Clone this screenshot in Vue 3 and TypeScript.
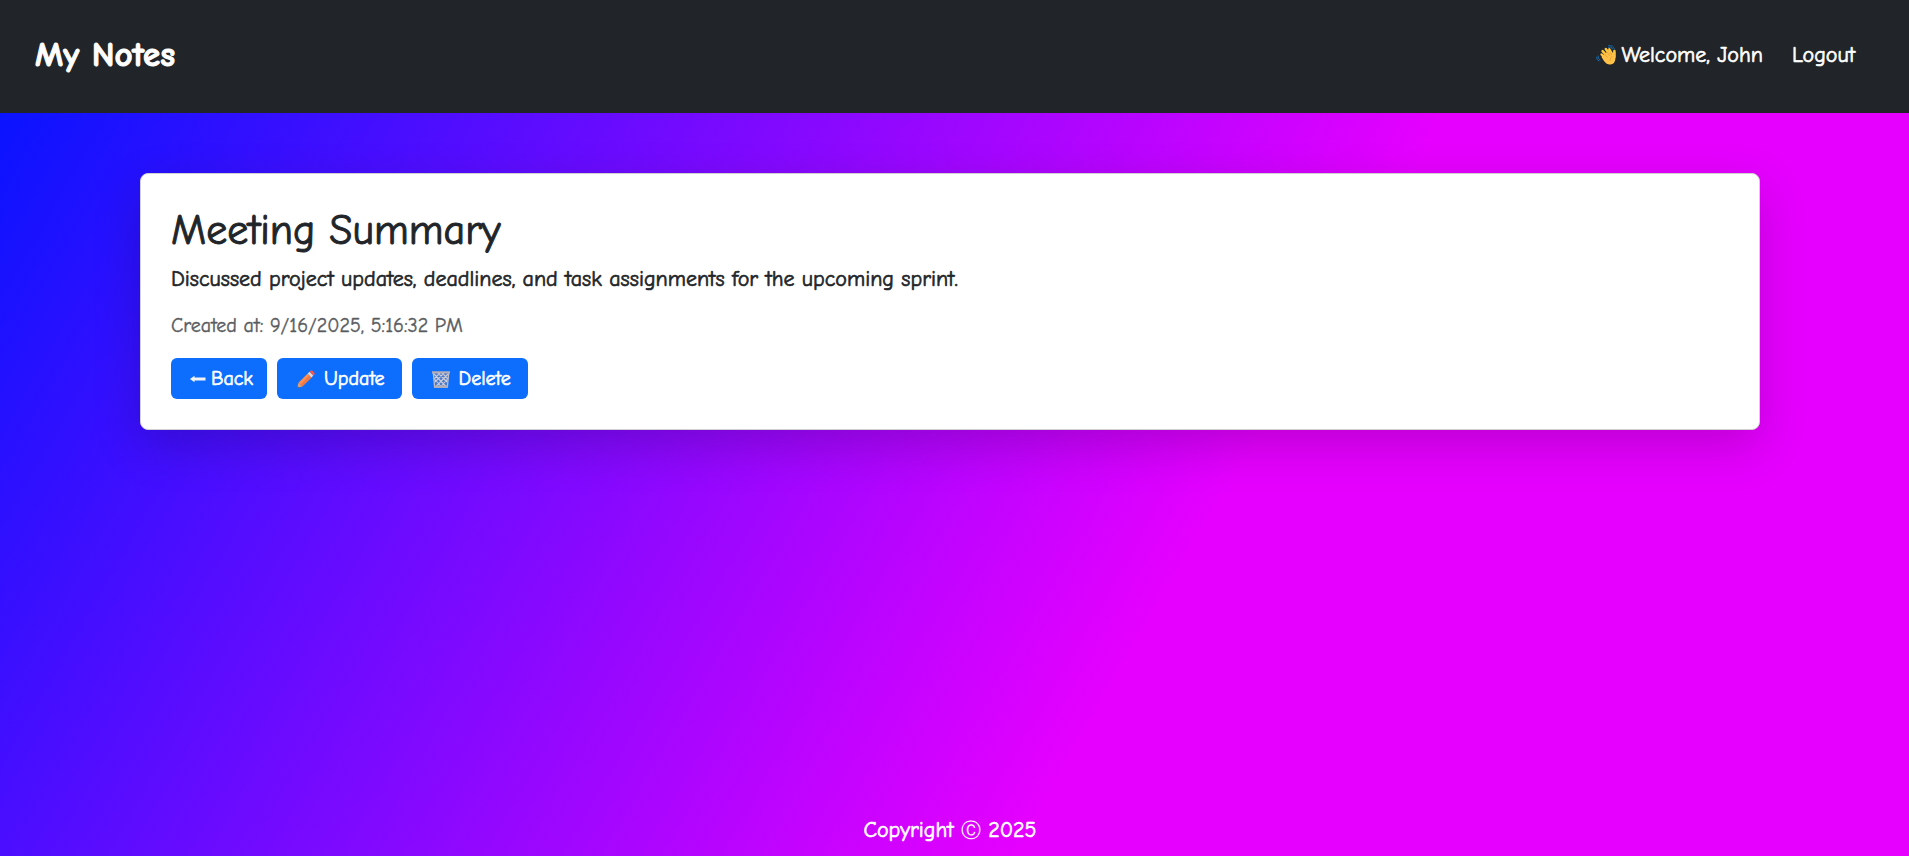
<script setup lang="ts">
interface Note {
  title: string
  body: string
  createdAt: string
}

const user = 'John'
const note: Note = {
  title: 'Meeting Summary',
  body: 'Discussed project updates, deadlines, and task assignments for the upcoming sprint.',
  createdAt: '9/16/2025, 5:16:32 PM',
}
</script>

<template>
  <div class="page">
    <header class="navbar">
      <a class="brand" href="#">My Notes</a>
      <nav class="links">
        <span class="welcome">
          <svg class="wave" viewBox="0 0 20 20" aria-hidden="true">
            <g fill="none" stroke="#176bb0" stroke-width="1" stroke-linecap="round">
              <path d="M12.5 2.5Q15.5 1 16.5 4M12.5 .8Q17.5 -.3 18.3 4" />
              <path d="M2 11Q1.5 14 4 15M.6 12.2Q.5 15.5 3 16" />
            </g>
            <g fill="none" stroke="#ffc83d" stroke-width="2.5" stroke-linecap="round">
              <path d="M6.6 6.2L12 12M9.8 4L14 10M13.3 4.4L16 9M5.6 9.5L10 14M18.4 6V12" />
            </g>
            <path d="M7 10L13 5.5L16.7 9.4L17.3 7L19.4 7V14Q18.8 19.2 14.5 19.5Q11 20 8 16L5.5 12Z" fill="#ffc14a" />
            <path d="M8 8.5L11.5 12.5M11 6.8L14 11M14 7L15.8 10M14 16Q14 12.5 16.5 11" fill="none" stroke="#e6921f" stroke-width=".6" />
          </svg>
          <span>Welcome, {{ user }}</span>
        </span>
        <a class="logout" href="#">Logout</a>
      </nav>
    </header>

    <main class="content">
      <article class="card">
        <h1>{{ note.title }}</h1>
        <p class="body">{{ note.body }}</p>
        <p class="created">Created at: {{ note.createdAt }}</p>
        <div class="actions">
          <button type="button" class="back">
            <svg class="arrow" viewBox="0 0 16 16" aria-hidden="true">
              <path d="M0 8L4.5 4.8V6.5H15.5V9.5H4.5V11.2Z" fill="#f3f3f3" />
            </svg>
            <span>Back</span>
          </button>
          <button type="button">
            <svg class="glyph" viewBox="0 0 18 18" aria-hidden="true">
              <path d="M0 18L1.5 12.7L5.2 16.5Z" fill="#d9a27c" />
              <path d="M0 18L.6 15.8L2.2 17.4Z" fill="#57606f" />
              <path d="M1.5 12.7L10.7 3.6L14.5 7.4L5.2 16.5Z" fill="#ff8f50" />
              <path d="M3.5 14.6L12.5 5.6L14.5 7.4L5.2 16.5Z" fill="#f07846" />
              <path d="M10.7 3.6L12.6 1.8L16.3 5.6L14.5 7.4Z" fill="#d9dbe3" />
              <path d="M12.6 1.8L13.7 .7Q14.5 0 15.4 .8L17.3 2.7Q18.1 3.6 17.3 4.5L16.3 5.6Z" fill="#ff5549" />
            </svg>
            <span>Update</span>
          </button>
          <button type="button">
            <svg class="glyph" viewBox="0 0 18 18" aria-hidden="true">
              <path d="M1.3 2.5H16.7L15.4 17.2H2.6Z" fill="#4779cf" />
              <path d="M2 4L14 16.5M6 3L15 12M10 3L16 9M2.5 9L9 16.5M16 4L4 16.5M12 3L3 12M8 3L2 9M15.5 9L9 16.5" fill="none" stroke="#cfcdd6" stroke-width="1.1" />
              <path d="M1.3 2.5L2.6 17H15.4L16.7 2.5" fill="none" stroke="#c2bec8" stroke-width="1.3" />
              <path d="M0 1.2H18V3.4H0ZM2.2 15.5H15.8V17.8H2.2Z" fill="#b5aeb7" />
            </svg>
            <span>Delete</span>
          </button>
        </div>
      </article>
    </main>

    <footer class="footer">Copyright <span class="mark">Ⓒ</span> 2025</footer>
  </div>
</template>

<style>
body {
  margin: 0;
}
</style>

<style scoped>
.page {
  display: flex;
  flex-direction: column;
  min-height: 100vh;
  box-sizing: border-box;
  color: #212529;
  font-family: "Comic Sans MS", "Comic Neue", cursive, "Open Sans", sans-serif;
  font-size: 22px;
  line-height: 30px;
  -webkit-text-stroke: 0.03em currentColor;
  background: linear-gradient(120deg, #0014ff 0%, #e600ff 63%);
}

.navbar {
  display: flex;
  align-items: center;
  justify-content: space-between;
  height: 113px;
  padding: 0 54px 4px 35px;
  box-sizing: border-box;
  background: #212529;
}

.brand {
  color: #fff;
  font-size: 35px;
  line-height: 48px;
  font-weight: 700;
  text-decoration: none;
  -webkit-text-stroke: 1px currentColor;
}

.links {
  display: flex;
  align-items: center;
  gap: 29px;
  color: #fff;
}

.welcome {
  display: flex;
  align-items: center;
  gap: 5px;
}

.wave {
  width: 20px;
  height: 20px;
}

.logout {
  color: #fff;
  text-decoration: none;
}

.content {
  flex: 1;
  padding: 60px 149px 0 140px;
}

.card {
  padding: 32px 30px 30px;
  background: #fff;
  border: 1px solid #d0d0d0;
  border-radius: 8px;
  box-shadow: 0 16px 48px rgba(0, 0, 0, 0.18);
}

h1 {
  margin: 0 0 8px;
  font-size: 42px;
  line-height: 50px;
  font-weight: 400;
  -webkit-text-stroke: 1px currentColor;
}

p {
  margin: 0 0 17px;
}

.created {
  color: #595c5f;
  font-size: 20px;
  -webkit-text-stroke: 0.02em currentColor;
}

.actions {
  display: flex;
  gap: 10px;
}

button {
  display: flex;
  align-items: center;
  gap: 9px;
  height: 41px;
  padding: 0 17px 0 20px;
  border: 0;
  border-radius: 6px;
  background: #0d6efd;
  color: #fff;
  font-family: inherit;
  font-size: 20px;
  line-height: 30px;
  -webkit-text-stroke: inherit;
}

.back {
  gap: 5px;
  padding: 0 14px 0 19px;
}

.arrow {
  width: 16px;
  height: 16px;
}

.glyph {
  width: 18px;
  height: 18px;
}

.footer {
  padding: 0 9px 11px 0;
  color: #fff;
  text-align: center;
}

.mark {
  font-family: "DejaVu Sans", sans-serif;
  font-size: 20px;
  -webkit-text-stroke: 0;
}
</style>
